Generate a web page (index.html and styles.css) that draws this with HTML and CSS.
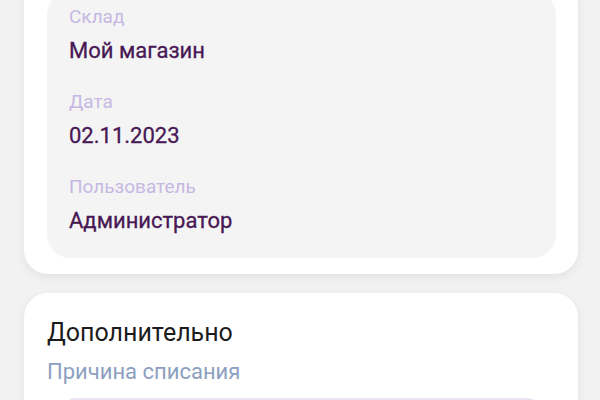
FILE: index.html
```html
<!DOCTYPE html>
<html lang="ru">

<head>
    <meta charset="UTF-8">
    <meta name="viewport" content="width=device-width, initial-scale=1.0">
    <title>Списание</title>
    <link rel="stylesheet" href="styles.css">
</head>

<body>
    <div class="page">
        <div class="card card-info">
            <div class="info-panel">
                <div class="field">
                    <div class="field-label">Склад</div>
                    <div class="field-value">Мой магазин</div>
                </div>
                <div class="field">
                    <div class="field-label">Дата</div>
                    <div class="field-value">02.11.2023</div>
                </div>
                <div class="field">
                    <div class="field-label">Пользователь</div>
                    <div class="field-value">Администратор</div>
                </div>
            </div>
        </div>

        <div class="card card-extra">
            <h2 class="card-title">Дополнительно</h2>
            <div class="extra-label">Причина списания</div>
            <div class="reason-input"></div>
        </div>
    </div>
</body>

</html>
```

FILE: styles.css
```css
/* Base */
body {
    font-family: Roboto, "Noto Sans", sans-serif;
    margin: 0;
    padding: 0;
    background-color: #f2f2f2;
}

.page {
    display: flex;
    flex-direction: column;
    gap: 19px;
    padding: 0 22px 0 24px;
}

/* Cards */
.card {
    background-color: #ffffff;
    border-radius: 24px;
    box-shadow: 0 3px 10px rgba(0, 0, 0, 0.07);
    padding: 16px 22px 16px 23px;
}

.card-info {
    margin-top: -25px;
}

.info-panel {
    background-color: #f4f4f4;
    border-radius: 24px;
    padding: 14px 22px 23px 22px;
    display: flex;
    flex-direction: column;
    gap: 25px;
}

.field {
    display: flex;
    flex-direction: column;
    gap: 8px;
}

.field-label {
    font-size: 19px;
    line-height: 24px;
    color: #c6b8e2;
}

.field-value {
    font-size: 22px;
    line-height: 28px;
    color: #471854;
    -webkit-text-stroke: 0.3px #471854;
}

/* Extra */
.card-extra {
    padding-top: 25px;
    padding-bottom: 40px;
}

.card-title {
    margin: 0;
    font-size: 25px;
    line-height: 30px;
    font-weight: 400;
    color: #1c1c1c;
}

.extra-label {
    margin-top: 10px;
    font-size: 22px;
    line-height: 28px;
    color: #8d9fc0;
}

.reason-input {
    margin: 12px 16px 0 16px;
    height: 48px;
    background-color: #ece4f3;
    border-radius: 12px;
}
```
